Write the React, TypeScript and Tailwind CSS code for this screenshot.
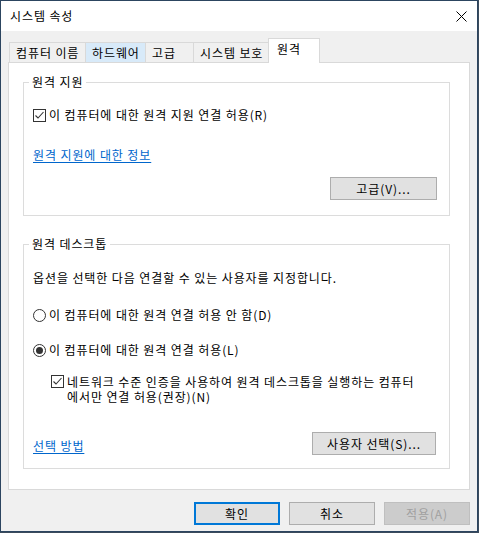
import React from "react";

const font = { fontFamily: '"Noto Sans CJK KR", "Noto Sans", sans-serif' };

function CheckBox() {
  return (
    <span className="flex w-[13px] h-[13px] shrink-0 items-center justify-center border border-[#333333] bg-white">
      <svg width="11" height="11" viewBox="0 0 11 11">
        <polyline points="1.5,5.5 4,8 9.5,2" fill="none" stroke="#333333" strokeWidth="1.1" />
      </svg>
    </span>
  );
}

function Radio({ checked }: { checked?: boolean }) {
  return (
    <span className="flex w-[13px] h-[13px] shrink-0 items-center justify-center rounded-full border border-[#333333] bg-white">
      {checked && <span className="w-[7px] h-[7px] rounded-full bg-[#333333]" />}
    </span>
  );
}

function Button({ children, className = "" }: { children: React.ReactNode; className?: string }) {
  return (
    <div
      className={`flex h-[23px] items-center justify-center border border-[#adadad] bg-[#e1e1e1] text-[12px] text-black ${className}`}
    >
      {children}
    </div>
  );
}

function GroupTitle({ children }: { children: React.ReactNode }) {
  return (
    <div className="-mt-[9px] ml-[5px] h-[16px] leading-[16px]">
      <span className="bg-white px-[3px]">{children}</span>
    </div>
  );
}

const tabs = [
  { label: "컴퓨터 이름", w: "w-[77px]", state: "normal" },
  { label: "하드웨어", w: "w-[61px]", state: "hover" },
  { label: "고급", w: "w-[49px]", state: "normal" },
  { label: "시스템 보호", w: "w-[76px]", state: "normal" },
];

export default function App() {
  return (
    <div className="w-[479px] h-[533px] bg-[#3b4b5c] tracking-[0.9px]" style={font}>
      <div className="w-[478px] h-[532px] border border-[#2c4560] bg-[#f0f0f0] text-[12px] text-black flex flex-col">
        {/* Title bar */}
        <div className="h-[30px] bg-white flex items-center justify-between pl-[9px] pr-[9px]">
          <span className="leading-[16px] -mt-[1px]">시스템 속성</span>
          <svg width="11" height="11" viewBox="0 0 11 11" className="mr-[1px]">
            <path d="M0.5 0.5 L10.5 10.5 M10.5 0.5 L0.5 10.5" stroke="#000" strokeWidth="1" />
          </svg>
        </div>

        {/* Body */}
        <div className="px-[7px] pt-[8px]">
          {/* Tabs */}
          <div className="flex items-end h-[23px] pl-[1px]">
            {tabs.map((t, i) => (
              <div
                key={t.label}
                className={`${t.w} h-[20px] border-t border-l border-r border-[#d9d9d9] pl-[6px] leading-[19px] whitespace-nowrap ${
                  i > 0 ? "-ml-[1px]" : ""
                } ${t.state === "hover" ? "bg-[#d8eaf9] border-[#c4dcf1]" : "bg-[#f0f0f0]"}`}
              >
                {t.label}
              </div>
            ))}
            <div className="relative z-10 -ml-[1px] -mb-[1px] w-[52px] h-[25px] border-t border-l border-r border-[#d9d9d9] bg-white pl-[8px] leading-[19px]">
              원격
            </div>
          </div>

          {/* Tab panel */}
          <div className="w-[462px] h-[428px] border border-[#d9d9d9] bg-white">
            {/* 원격 지원 */}
            <div className="mt-[19px] ml-[14px] w-[427px] h-[134px] border border-[#dcdcdc] flex flex-col">
              <GroupTitle>원격 지원</GroupTitle>
              <div className="mt-[17px] ml-[9px] flex items-center gap-[3px] h-[16px]">
                <CheckBox />
                <span className="leading-[16px]">이 컴퓨터에 대한 원격 지원 연결 허용(R)</span>
              </div>
              <div className="mt-[24px] ml-[9px] h-[16px] leading-[16px]">
                <span className="text-[#0066cc] underline underline-offset-[2px]">원격 지원에 대한 정보</span>
              </div>
              <div className="mt-[14px] flex justify-end pr-[12px]">
                <Button className="w-[107px]">고급(V)...</Button>
              </div>
            </div>

            {/* 원격 데스크톱 */}
            <div className="mt-[28px] ml-[14px] w-[427px] h-[225px] border border-[#dcdcdc] flex flex-col">
              <GroupTitle>원격 데스크톱</GroupTitle>
              <div className="mt-[18px] ml-[9px] h-[16px] leading-[16px]">
                옵션을 선택한 다음 연결할 수 있는 사용자를 지정합니다.
              </div>
              <div className="mt-[21px] ml-[9px] flex items-center gap-[3px] h-[16px]">
                <Radio />
                <span className="leading-[16px]">이 컴퓨터에 대한 원격 연결 허용 안 함(D)</span>
              </div>
              <div className="mt-[19px] ml-[9px] flex items-center gap-[3px] h-[16px]">
                <Radio checked />
                <span className="leading-[16px]">이 컴퓨터에 대한 원격 연결 허용(L)</span>
              </div>
              <div className="mt-[16px] ml-[27px] flex items-start gap-[3px]">
                <span className="mt-[1px]">
                  <CheckBox />
                </span>
                <span className="leading-[15px] w-[380px] whitespace-nowrap">
                  네트워크 수준 인증을 사용하여 원격 데스크톱을 실행하는 컴퓨터
                  <br />
                  에서만 연결 허용(권장)(N)
                </span>
              </div>
              <div className="mt-[28px] ml-[9px] mr-[13px] flex items-start justify-between">
                <span className="mt-[6px] leading-[16px] text-[#0066cc] underline underline-offset-[2px]">선택 방법</span>
                <Button className="w-[124px]">사용자 선택(S)...</Button>
              </div>
            </div>
          </div>

          {/* Bottom buttons */}
          <div className="mt-[12px] flex justify-end gap-[9px]">
            <div className="flex h-[23px] w-[86px] items-center justify-center border-2 border-[#0078d7] bg-[#e1e1e1]">
              확인
            </div>
            <Button className="w-[86px]">취소</Button>
            <div className="flex h-[23px] w-[86px] items-center justify-center border border-[#bfbfbf] bg-[#cccccc] text-[#a0a0a0]">
              적용(A)
            </div>
          </div>
        </div>
      </div>
    </div>
  );
}
